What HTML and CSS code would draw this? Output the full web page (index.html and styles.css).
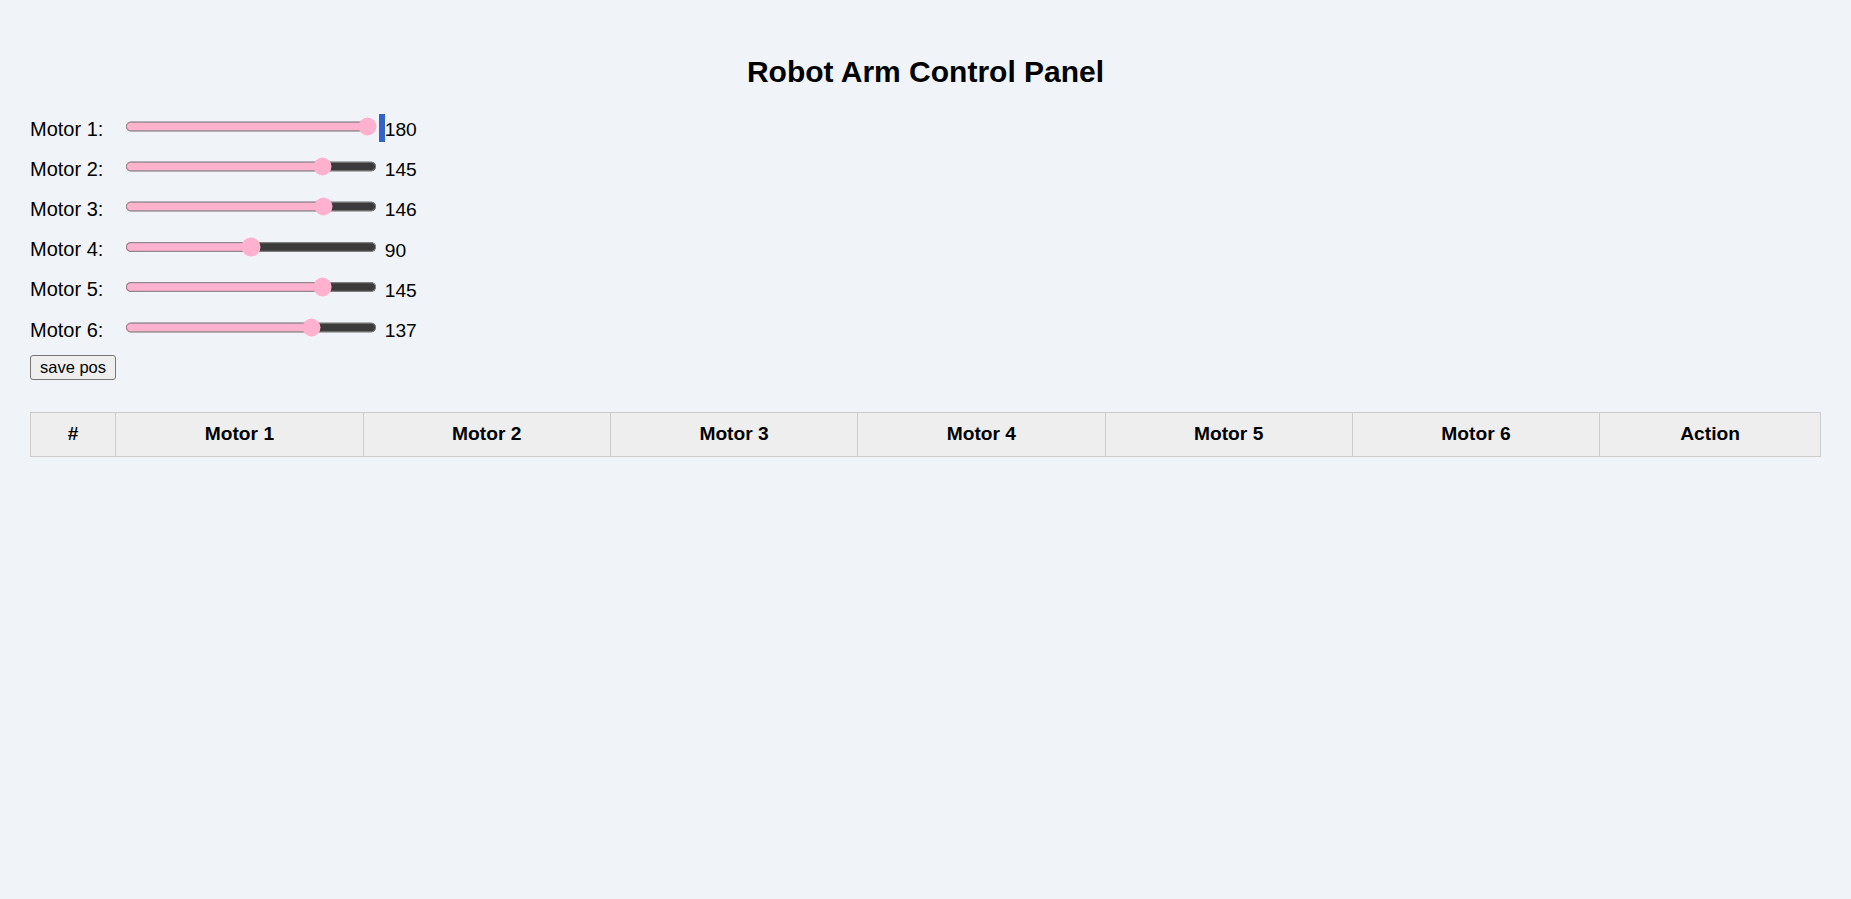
FILE: index.html
```html
<!DOCTYPE html>
<html lang="en">
<head>
<meta charset="utf-8">
<title>Robot Arm Control Panel</title>
<link rel="stylesheet" href="styles.css">
</head>
<body>
<main class="page">
  <h1 class="title">Robot Arm Control Panel</h1>
  <section class="controls">
    <div class="row"><label class="label" for="m1">Motor 1:</label><input class="slider" id="m1" type="range" min="0" max="180" value="180"><span class="sel"></span><span class="value">180</span></div>
    <div class="row"><label class="label" for="m2">Motor 2:</label><input class="slider" id="m2" type="range" min="0" max="180" value="145"><span class="gap"></span><span class="value">145</span></div>
    <div class="row"><label class="label" for="m3">Motor 3:</label><input class="slider" id="m3" type="range" min="0" max="180" value="146"><span class="gap"></span><span class="value">146</span></div>
    <div class="row"><label class="label" for="m4">Motor 4:</label><input class="slider" id="m4" type="range" min="0" max="180" value="90"><span class="gap"></span><span class="value">90</span></div>
    <div class="row"><label class="label" for="m5">Motor 5:</label><input class="slider" id="m5" type="range" min="0" max="180" value="145"><span class="gap"></span><span class="value">145</span></div>
    <div class="row"><label class="label" for="m6">Motor 6:</label><input class="slider" id="m6" type="range" min="0" max="180" value="137"><span class="gap"></span><span class="value">137</span></div>
    <div class="actions"><button class="btn" type="button">save pos</button></div>
  </section>
  <table class="positions">
    <thead>
      <tr>
        <th>#</th>
        <th>Motor 1</th>
        <th>Motor 2</th>
        <th>Motor 3</th>
        <th>Motor 4</th>
        <th>Motor 5</th>
        <th>Motor 6</th>
        <th>Action</th>
      </tr>
    </thead>
    <tbody></tbody>
  </table>
</main>
</body>
</html>
```
FILE: styles.css
```css
html, body {
  margin: 0;
  padding: 0;
}
body {
  background: #f0f4f8;
  color: #000;
  font-family: "Liberation Sans", Arial, sans-serif;
}
.page {
  padding: 0 30px;
}
.title {
  margin: 54px 0 20px;
  font-size: 30px;
  line-height: 35px;
  font-weight: bold;
  text-align: center;
}
.controls {
  display: flex;
  flex-direction: column;
}
.row {
  display: flex;
  align-items: center;
  height: 40.1px;
}
.label {
  width: 92.6px;
  font-size: 20px;
  line-height: 22px;
}
.slider {
  zoom: 1.2;
  width: 210px;
  margin: 0 2px 4px 2px;
  accent-color: #ffb1cd;
}
.sel, .gap {
  width: 5.4px;
  height: 28px;
  margin-bottom: 2px;
}
.sel {
  background: #3064cc;
}
.value {
  font-size: 19.2px;
  line-height: 22px;
  margin-top: 2.4px;
}
.actions {
  display: flex;
  margin-top: 5px;
}
.btn {
  box-sizing: border-box;
  height: 25.4px;
  padding: 0 9px;
  font-family: "Liberation Sans", Arial, sans-serif;
  font-size: 16.5px;
  color: #000;
  background: #efefef;
  border: 1px solid #767676;
  border-radius: 3px;
}
.positions {
  width: 100%;
  margin-top: 32px;
  border-collapse: collapse;
}
.positions th {
  background: #eeeeee;
  border: 1px solid #cccccc;
  padding: 10.3px 9.6px;
  font-size: 19.2px;
  font-weight: bold;
  text-align: center;
}
```
